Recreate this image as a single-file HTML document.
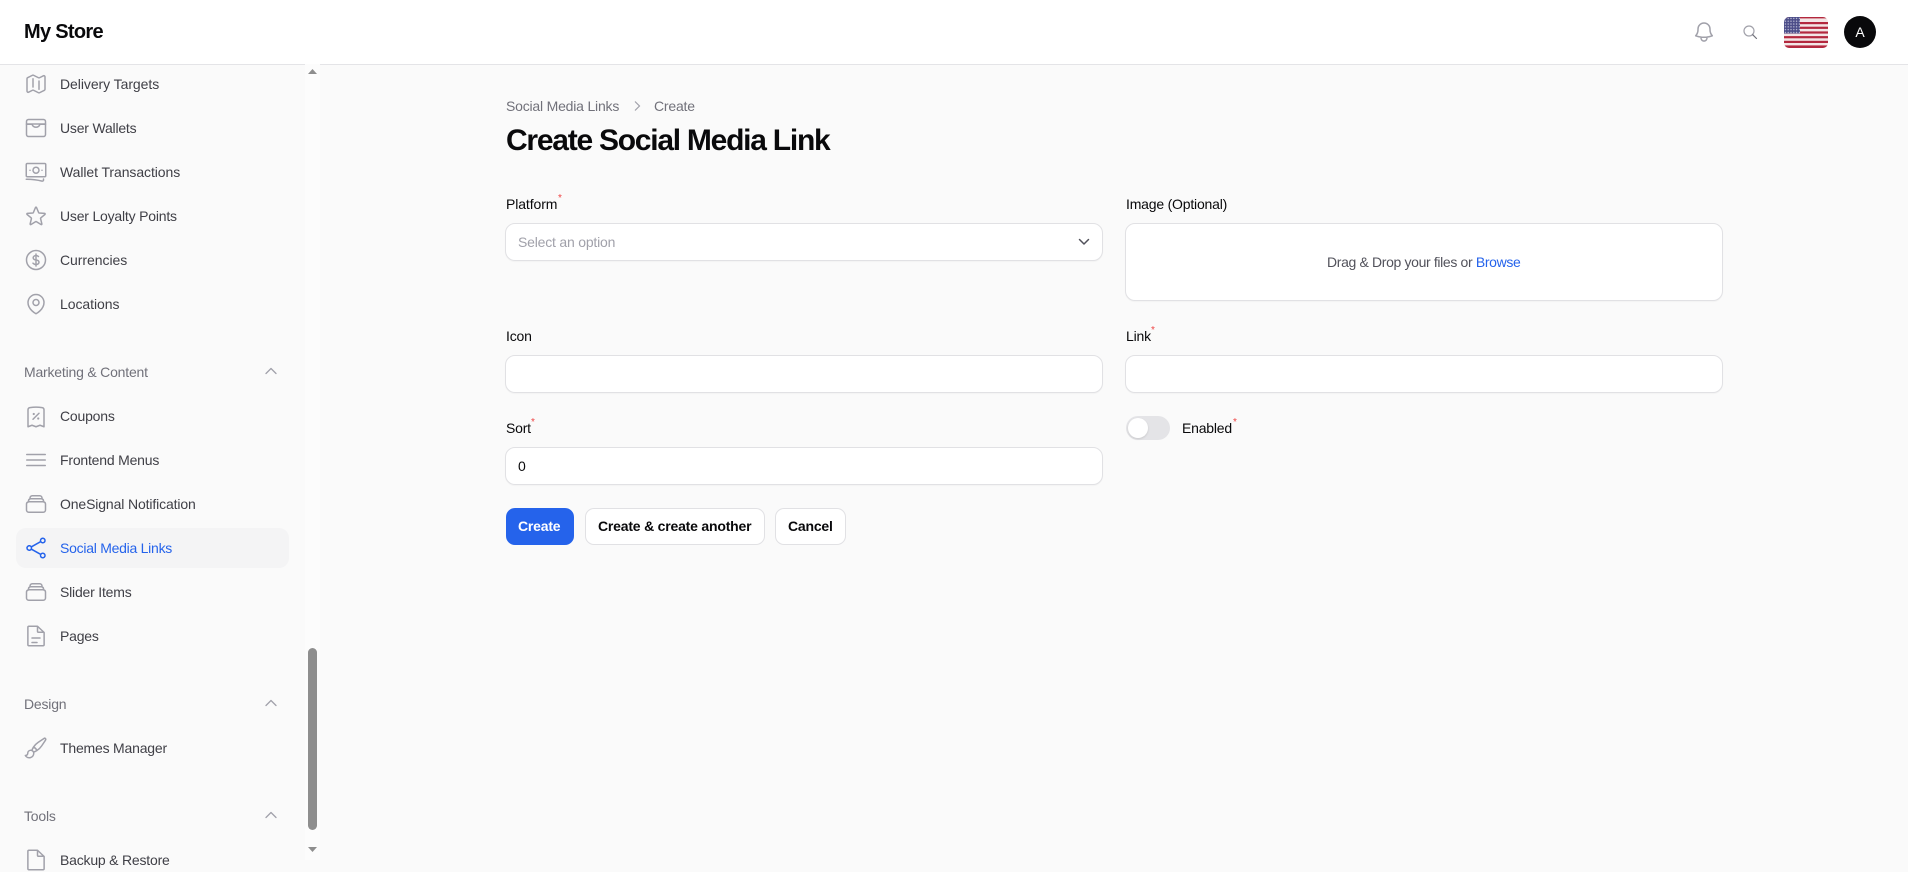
<!DOCTYPE html>
<html lang="en"><head><meta charset="utf-8"><title>Create Social Media Link</title>
<style>
*{box-sizing:border-box}
html,body{margin:0;padding:0;width:1908px;height:860px;overflow:hidden;background:#fafafa;font-family:"Liberation Sans",sans-serif;color:#09090b}
.t{position:absolute;white-space:nowrap;line-height:20px;font-size:14px;letter-spacing:-.2px}
.nav{color:#3f3f46;left:60px}
.grp{color:#71717a;left:24px}
.ic{position:absolute;left:24px;width:24px;height:24px;fill:none;stroke:#a1a1aa;stroke-width:1.5;stroke-linecap:round;stroke-linejoin:round}
.chev{position:absolute;left:264px;width:14px;height:14px;fill:none;stroke:#a1a1aa;stroke-width:1.3;stroke-linecap:round;stroke-linejoin:round}
.box{position:absolute;background:#fff;border:1px solid #e1e1e4;border-radius:10px;box-shadow:0 1px 1px rgba(0,0,0,.03)}
.star{position:absolute;color:#ef4444;font-size:10px;line-height:10px}
.btn{position:absolute;border-radius:9px;background:#fff;border:1px solid #e1e1e4;height:37px;top:508px}
b.t{font-weight:700}
</style></head><body>
<div style="position:absolute;left:0;top:0;width:1908px;height:65px;background:#fff;border-bottom:1px solid #e4e4e7"></div>
<b class="t" style="left:24px;top:21px;font-size:20px;line-height:22px;letter-spacing:-.7px;color:#09090b">My Store</b>

<!-- sidebar scrollbar -->
<div style="position:absolute;left:305px;top:64px;width:15px;height:796px;background:#fcfcfc"></div>
<div style="position:absolute;left:308px;top:648px;width:9px;height:182px;background:#8e8e8e;border-radius:5px"></div>
<svg style="position:absolute;left:307px;top:68px" width="11" height="8"><path d="M5.5 1 10 6H1z" fill="#8e8e8e"/></svg>
<svg style="position:absolute;left:307px;top:846px" width="11" height="8"><path d="M1 1h9L5.5 6z" fill="#8e8e8e"/></svg>

<!-- active bg -->
<div style="position:absolute;left:16px;top:528px;width:273px;height:40px;background:#f4f4f5;border-radius:10px"></div>

<!-- nav icons -->
<svg class="ic" style="top:72px" viewBox="0 0 24 24"><path d="M9 6.750V15m6-6v8.250m.503 3.498l4.875-2.437c.381-.190.622-.580.622-1.006V4.820c0-.836-.880-1.380-1.628-1.006l-3.869 1.934c-.317.159-.690.159-1.006 0L9.503 3.252a1.125 1.125 0 00-1.006 0L3.622 5.689C3.240 5.880 3 6.270 3 6.695V19.180c0 .836.880 1.380 1.628 1.006l3.869-1.934c.317-.159.690-.159 1.006 0l4.994 2.497c.317.158.690.158 1.006 0z"/></svg>
<svg class="ic" style="top:116px" viewBox="0 0 24 24"><rect x="2.500" y="3.500" width="19" height="17" rx="2"/><path d="M2.500 8h19M2.500 8.200h5.500c.6 2 2 3 4 3s3.400-1 4-3h5.500"/></svg>
<svg class="ic" style="top:160px" viewBox="0 0 24 24"><path d="M2.250 19.200a60 60 0 0 1 15.800 1.900c.7.200 1.450-.300 1.450-1V19M3.400 3.500h17.200c.650 0 1.150.500 1.150 1.150v11c0 .650-.500 1.150-1.150 1.150H3.400c-.650 0-1.150-.500-1.150-1.150v-11c0-.650.500-1.150 1.150-1.150zM15 10.200a3 3 0 11-6 0 3 3 0 016 0zm3 0h.008v.008H18V10.200zm-12 0h.008v.008H6V10.200z"/></svg>
<svg class="ic" style="top:204px" viewBox="0 0 24 24"><path d="M11.480 3.499a.562.562 0 011.040 0l2.125 5.111a.563.563 0 00.475.345l5.518.442c.499.040.701.663.321.988l-4.204 3.602a.563.563 0 00-.182.557l1.285 5.385a.562.562 0 01-.840.610l-4.725-2.885a.562.562 0 00-.586 0L6.982 20.540a.562.562 0 01-.840-.610l1.285-5.386a.562.562 0 00-.182-.557l-4.204-3.602a.563.563 0 01.321-.988l5.518-.442a.563.563 0 00.475-.345L11.480 3.500z"/></svg>
<svg class="ic" style="top:248px" viewBox="0 0 24 24"><path d="M12 6v12m-3-2.818l.879.659c1.171.879 3.070.879 4.242 0 1.172-.879 1.172-2.303 0-3.182C13.536 12.219 12.768 12 12 12c-.725 0-1.450-.220-2.003-.659-1.106-.879-1.106-2.303 0-3.182s2.900-.879 4.006 0l.415.330M21.500 12a9.500 9.500 0 11-19 0 9.500 9.500 0 0119 0z"/></svg>
<svg class="ic" style="top:292px" viewBox="0 0 24 24"><path d="M15 10.500a3 3 0 11-6 0 3 3 0 016 0z"/><path d="M20 10.500c0 7.142-8 11.250-8 11.250S4 17.642 4 10.500a8 8 0 1116 0z"/></svg>
<svg class="ic" style="top:405px" viewBox="0 0 24 24"><path d="M9 14.250l6-6m5-3.493V21.750l-4-1.500-4 1.500-4-1.500-4 1.500V4.757c0-1.108.806-2.057 1.907-2.185a48.507 48.507 0 0112.186 0c1.100.128 1.907 1.077 1.907 2.185zM9.750 9h.008v.008H9.750V9zm.375 0a.375.375 0 11-.750 0 .375.375 0 01.750 0zm4.125 4.500h.008v.008h-.008V13.500zm.375 0a.375.375 0 11-.750 0 .375.375 0 01.750 0z"/></svg>
<svg class="ic" style="top:448px" viewBox="0 0 24 24"><path d="M2.750 6.500h18.500M2.750 12h18.500M2.750 17.500h18.500"/></svg>
<svg class="ic" style="top:492px" viewBox="0 0 24 24"><path d="M6 6.878V6a2.250 2.250 0 012.250-2.250h7.500A2.250 2.250 0 0118 6v.878m-12 0c.235-.083.487-.128.750-.128h10.500c.263 0 .515.045.750.128m-12 0A2.250 2.250 0 004.500 9v.878m13.500-3A2.250 2.250 0 0119.500 9v.878m0 0a2.246 2.246 0 00-.750-.128H5.250c-.263 0-.515.045-.750.128m15 0A2.250 2.250 0 0121.500 12v6a2.250 2.250 0 01-2.250 2.250H4.750A2.250 2.250 0 012.500 18v-6c0-.980.626-1.813 2-2.122"/></svg>
<svg class="ic" style="top:536px;stroke:#2563eb" viewBox="0 0 24 24"><path d="M7.217 10.907a2.250 2.250 0 100 2.186m0-2.186c.180.324.283.696.283 1.093s-.103.770-.283 1.093m0-2.186l9.566-5.314m-9.566 7.500l9.566 5.314m0 0a2.250 2.250 0 103.935 2.186 2.250 2.250 0 00-3.935-2.186zm0-12.814a2.250 2.250 0 103.933-2.185 2.250 2.250 0 00-3.933 2.185z"/></svg>
<svg class="ic" style="top:580px" viewBox="0 0 24 24"><path d="M6 6.878V6a2.250 2.250 0 012.250-2.250h7.500A2.250 2.250 0 0118 6v.878m-12 0c.235-.083.487-.128.750-.128h10.500c.263 0 .515.045.750.128m-12 0A2.250 2.250 0 004.500 9v.878m13.500-3A2.250 2.250 0 0119.500 9v.878m0 0a2.246 2.246 0 00-.750-.128H5.250c-.263 0-.515.045-.750.128m15 0A2.250 2.250 0 0121.500 12v6a2.250 2.250 0 01-2.250 2.250H4.750A2.250 2.250 0 012.500 18v-6c0-.980.626-1.813 2-2.122"/></svg>
<svg class="ic" style="top:624px" viewBox="0 0 24 24"><path d="M13.500 2.250H5c-.621 0-1.125.504-1.125 1.125v17.250c0 .621.504 1.125 1.125 1.125h14c.621 0 1.125-.504 1.125-1.125V8.500l-6.625-6.250zM13.500 2.500v4.750c0 .6.500 1 1 1h5.500M8 14h8m-8 4.500h5"/></svg>
<svg class="ic" style="top:736px" viewBox="0 0 24 24"><path d="M9.530 16.122a3 3 0 00-5.780 1.128 2.250 2.250 0 01-2.400 2.245 4.500 4.500 0 008.400-2.245c0-.399-.078-.780-.220-1.128zm0 0a15.998 15.998 0 003.388-1.620m-5.043-.025a15.994 15.994 0 011.622-3.395m3.420 3.420a15.995 15.995 0 004.764-4.648l3.876-5.814a1.151 1.151 0 00-1.597-1.597L14.146 6.320a15.996 15.996 0 00-4.649 4.763m3.420 3.420a6.776 6.776 0 00-3.420-3.420"/></svg>
<svg class="ic" style="top:848px" viewBox="0 0 24 24"><path d="M13.500 2.250H5c-.621 0-1.125.504-1.125 1.125v17.250c0 .621.504 1.125 1.125 1.125h14c.621 0 1.125-.504 1.125-1.125V8.500l-6.625-6.250zM13.500 2.500v4.750c0 .6.500 1 1 1h5.500"/></svg>

<!-- nav text -->
<span class="t nav" style="top:74px;letter-spacing:-.06px">Delivery Targets</span>
<span class="t nav" style="top:118px">User Wallets</span>
<span class="t nav" style="top:162px;letter-spacing:-.08px">Wallet Transactions</span>
<span class="t nav" style="top:206px">User Loyalty Points</span>
<span class="t nav" style="top:250px;letter-spacing:-.05px">Currencies</span>
<span class="t nav" style="top:294px;letter-spacing:-.05px">Locations</span>
<span class="t grp" style="top:362px">Marketing &amp; Content</span>
<svg class="chev" style="top:364px" viewBox="0 0 14 14"><path d="M2 9.500 7 4.500l5 5"/></svg>
<span class="t nav" style="top:406px">Coupons</span>
<span class="t nav" style="top:450px">Frontend Menus</span>
<span class="t nav" style="top:494px;letter-spacing:-.13px">OneSignal Notification</span>
<span class="t nav" style="top:538px;color:#2563eb;letter-spacing:-.26px">Social Media Links</span>
<span class="t nav" style="top:582px">Slider Items</span>
<span class="t nav" style="top:626px">Pages</span>
<span class="t grp" style="top:694px">Design</span>
<svg class="chev" style="top:696px" viewBox="0 0 14 14"><path d="M2 9.500 7 4.500l5 5"/></svg>
<span class="t nav" style="top:738px">Themes Manager</span>
<span class="t grp" style="top:806px">Tools</span>
<svg class="chev" style="top:808px" viewBox="0 0 14 14"><path d="M2 9.500 7 4.500l5 5"/></svg>
<span class="t nav" style="top:850px">Backup &amp; Restore</span>

<!-- header right -->
<svg style="position:absolute;left:1692px;top:20px" width="24" height="24" viewBox="0 0 24 24" fill="none" stroke="#a1a1aa" stroke-width="1.500" stroke-linecap="round" stroke-linejoin="round"><path d="M14.857 17.082a23.848 23.848 0 005.454-1.310A8.967 8.967 0 0118 9.750v-.700V9A6 6 0 006 9v.750a8.967 8.967 0 01-2.312 6.022c1.733.640 3.560 1.085 5.455 1.310m5.714 0a24.255 24.255 0 01-5.714 0m5.714 0a3 3 0 11-5.714 0"/></svg>
<svg style="position:absolute;left:1742px;top:24px" width="16" height="16" viewBox="0 0 16 16" fill="none" stroke="#a1a1aa" stroke-width="1.200" stroke-linecap="round"><circle cx="7" cy="7" r="5"/><path d="M10.700 10.700 14.500 14.500" stroke="#71717a"/></svg>
<svg style="position:absolute;left:1784px;top:17px" width="44" height="31" viewBox="0 0 44 31">
<defs><clipPath id="fc"><rect width="44" height="31" rx="5"/></clipPath><pattern id="st" width="2.800" height="2.800" patternUnits="userSpaceOnUse"><circle cx="1.400" cy="1.400" r=".7" fill="#c9cade"/></pattern></defs>
<g clip-path="url(#fc)"><rect width="44" height="31" fill="#f3e6e6"/>
<g fill="#b3283e"><rect y="0" width="44" height="1.400"/><rect y="5" width="44" height="2.200"/><rect y="9.700" width="44" height="2.200"/><rect y="14.400" width="44" height="2.200"/><rect y="19.100" width="44" height="2.200"/><rect y="23.800" width="44" height="2.200"/><rect y="28.400" width="44" height="2.600"/></g>
<rect width="16" height="16.500" fill="#4b4c88"/><rect width="16" height="16.500" fill="url(#st)"/></g></svg>
<div style="position:absolute;left:1844px;top:16px;width:32px;height:32px;border-radius:50%;background:#09090b;color:#fff;font-size:14px;line-height:32px;text-align:center">A</div>

<!-- main heading -->
<span class="t" style="left:506px;top:96px;color:#71717a">Social Media Links</span>
<svg style="position:absolute;left:631px;top:100px" width="12" height="12" viewBox="0 0 12 12" fill="none" stroke="#a1a1aa" stroke-width="1.200"><path d="M4 1.500 8.500 6 4 10.500"/></svg>
<span class="t" style="left:654px;top:96px;color:#71717a">Create</span>
<b class="t" style="left:506px;top:123px;font-size:30px;line-height:36px;letter-spacing:-1.25px;color:#09090b">Create Social Media Link</b>

<!-- form -->
<span class="t" style="left:506px;top:194px;letter-spacing:-.1px">Platform</span><span class="star" style="left:558px;top:194px">*</span>
<div class="box" style="left:505px;top:223px;width:598px;height:38px"></div>
<span class="t" style="left:518px;top:232px;color:#a1a1aa">Select an option</span>
<svg style="position:absolute;left:1076px;top:234px" width="16" height="16" viewBox="0 0 16 16" fill="none" stroke="#52525b" stroke-width="1.500" stroke-linecap="round" stroke-linejoin="round"><path d="M3.500 5.500 8 10l4.500-4.500"/></svg>

<span class="t" style="left:1126px;top:194px">Image (Optional)</span>
<div class="box" style="left:1125px;top:223px;width:598px;height:78px"></div>
<span class="t" style="left:1327px;top:252px;color:#52525b;letter-spacing:-.35px">Drag &amp; Drop your files or <span style="color:#2563eb">Browse</span></span>

<span class="t" style="left:506px;top:326px">Icon</span>
<div class="box" style="left:505px;top:355px;width:598px;height:38px"></div>
<span class="t" style="left:1126px;top:326px">Link</span><span class="star" style="left:1151px;top:326px">*</span>
<div class="box" style="left:1125px;top:355px;width:598px;height:38px"></div>

<span class="t" style="left:506px;top:418px">Sort</span><span class="star" style="left:531px;top:418px">*</span>
<div class="box" style="left:505px;top:447px;width:598px;height:38px"></div>
<span class="t" style="left:518px;top:456px">0</span>

<div style="position:absolute;left:1126px;top:416px;width:44px;height:24px;border-radius:12px;background:#e4e4e7"></div>
<div style="position:absolute;left:1128px;top:418px;width:20px;height:20px;border-radius:50%;background:#fff;box-shadow:0 1px 2px rgba(0,0,0,.12)"></div>
<span class="t" style="left:1182px;top:418px">Enabled</span><span class="star" style="left:1233px;top:418px">*</span>

<div class="btn" style="left:506px;width:68px;background:#2563eb;border-color:#2563eb"></div>
<b class="t" style="left:518px;top:516px;color:#fff">Create</b>
<div class="btn" style="left:585px;width:180px"></div>
<b class="t" style="left:598px;top:516px">Create &amp; create another</b>
<div class="btn" style="left:775px;width:71px"></div>
<b class="t" style="left:788px;top:516px">Cancel</b>
</body></html>
